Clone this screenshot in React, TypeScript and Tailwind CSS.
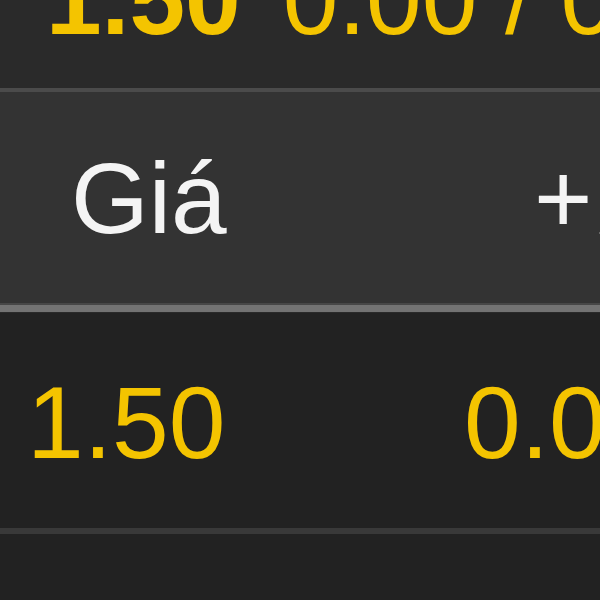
import React from "react";

const font = { fontFamily: '"Liberation Sans", Arial, sans-serif' };

export default function App() {
    return (
        <div className="w-[600px] h-[600px] overflow-hidden bg-[#222222]" style={font}>
            {/* Summary row, clipped at top */}
            <div className="h-[88px] bg-[#2a2a2a] overflow-hidden">
                <div className="flex items-baseline whitespace-nowrap text-[100px] leading-none text-[#f4c400] mt-[-51px] pl-[46px]">
                    <span className="font-bold">1.50</span>
                    <span className="ml-[42px]">0.00 / 0.00%</span>
                </div>
            </div>
            <div className="h-[4px] bg-[#4b4b4b]" />

            {/* Table header */}
            <div className="h-[211px] bg-[#333333] flex items-center whitespace-nowrap text-[100px] leading-none text-[#f4f4f4] overflow-hidden">
                <div className="w-[462px] shrink-0 pl-[71px]">Giá</div>
                <div className="shrink-0 pl-[72px]">
                    <span>+</span>
                    <span className="ml-[7px]">/-</span>
                </div>
            </div>
            <div className="h-[2px] bg-[#474747]" />
            <div className="h-[7px] bg-[#737373]" />
            <div className="h-[1px] bg-[#2a2a2a]" />

            {/* Row */}
            <div className="h-[215px] flex items-center whitespace-nowrap text-[102px] leading-none text-[#f4c400] overflow-hidden">
                <div className="w-[464px] shrink-0 pl-[27px] pt-[4px]">1.50</div>
                <div className="shrink-0 pt-[4px]">0.00</div>
            </div>
            <div className="h-[6px] bg-[#393939]" />
        </div>
    );
}
